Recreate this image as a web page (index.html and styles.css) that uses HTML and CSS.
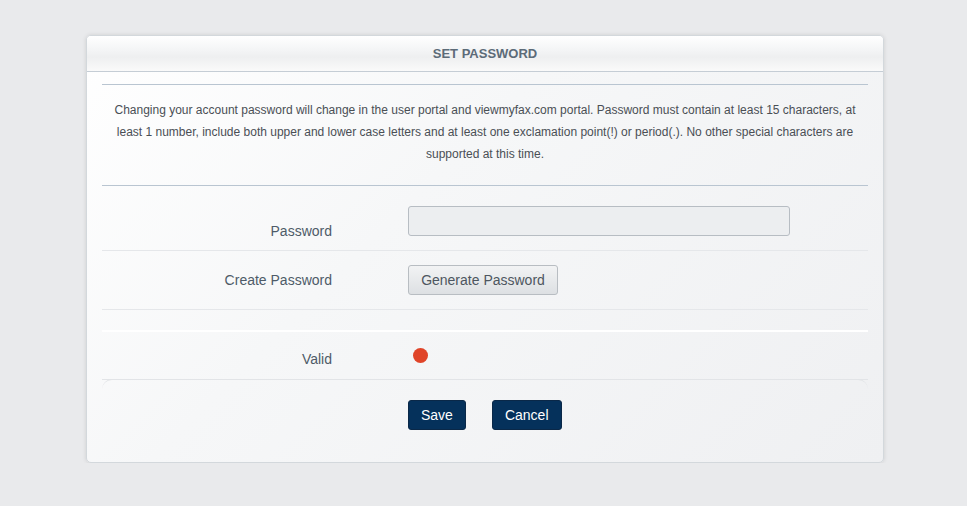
FILE: index.html
```html
<!DOCTYPE html>
<html>
<head>
<meta charset="utf-8">
<link rel="stylesheet" href="styles.css">
</head>
<body>
<div class="page">
  <div class="card">
    <div class="card-header">SET PASSWORD</div>
    <div class="card-body">
      <hr class="rule">
      <p class="info">Changing your account password will change in the user portal and viewmyfax.com portal. Password must contain at least 15 characters, at least 1 number, include both upper and lower case letters and at least one exclamation point(!) or period(.). No other special characters are supported at this time.</p>
      <hr class="rule rule-bottom">
      <div class="row row-password">
        <label class="label">Password</label>
        <div class="control"><input class="input" type="password"></div>
      </div>
      <div class="row row-create">
        <label class="label">Create Password</label>
        <div class="control"><button class="btn-gen">Generate Password</button></div>
      </div>
      <div class="row row-empty"></div>
      <div class="row row-valid">
        <label class="label">Valid</label>
        <div class="control"><span class="dot"></span></div>
      </div>
      <div class="footer">
        <button class="btn-primary">Save</button>
        <button class="btn-primary">Cancel</button>
      </div>
    </div>
  </div>
</div>
</body>
</html>
```

FILE: styles.css
```css
html, body {
  margin: 0;
  padding: 0;
  background: #e9eaec;
  font-family: "Liberation Sans", Arial, sans-serif;
}
.page {
  padding: 35px 0 0 86px;
}
.card {
  width: 798px;
  height: 428px;
  border: 1px solid #d3d8dc;
  border-radius: 5px;
  background: linear-gradient(135deg, #ffffff 0%, #f6f7f8 40%, #eff0f2 100%);
  box-shadow: 0 0 4px rgba(0,0,0,0.12);
  overflow: hidden;
  box-sizing: border-box;
}
.card-header {
  height: 35px;
  border-bottom: 1px solid #c5cdd5;
  background: linear-gradient(to bottom, #ffffff 0%, #f5f6f7 35%, #eeeff0 60%, #fafafa 100%);
  text-align: center;
  font-size: 13px;
  font-weight: bold;
  color: #5c6b78;
  line-height: 35px;
}
.card-body {
  padding: 0 15px;
}
.rule {
  border: 0;
  border-top: 1px solid #b9c5d1;
  margin: 12px 0 0;
}
.rule-bottom {
  margin: 0;
}
.info {
  margin: 0;
  padding: 14px 8px 20px;
  text-align: center;
  font-size: 12px;
  line-height: 22px;
  color: #4a4f55;
}
.row {
  display: grid;
  grid-template-columns: 230px 1fr;
  column-gap: 76px;
  border-bottom: 1px solid #e5e7ea;
}
.label {
  text-align: right;
  font-size: 14px;
  color: #4e5b68;
}
.row-password {
  height: 65px;
  box-sizing: border-box;
  padding-top: 20px;
}
.row-password .label {
  padding-top: 17px;
}
.input {
  display: block;
  width: 382px;
  height: 30px;
  box-sizing: border-box;
  border: 1px solid #b7bdc3;
  border-radius: 3px;
  background: #eceef0;
  margin: 0;
}
.row-create {
  height: 59px;
  box-sizing: border-box;
  padding-top: 14px;
}
.row-create .label {
  line-height: 30px;
}
.btn-gen {
  display: block;
  width: 150px;
  height: 30px;
  border: 1px solid #b8bdc2;
  border-radius: 3px;
  background: linear-gradient(to bottom, #f2f3f4, #dde0e3);
  font-family: "Liberation Sans", Arial, sans-serif;
  font-size: 14px;
  color: #4d5660;
  padding: 0;
}
.row-empty {
  height: 22px;
  border-bottom: 2px solid #ffffff;
  box-sizing: border-box;
}
.row-valid {
  height: 48px;
  box-sizing: border-box;
  padding-top: 19px;
  border-bottom: 1px solid #e2e4e7;
}
.row-valid .label {
  line-height: 16px;
}
.dot {
  display: block;
  width: 15px;
  height: 15px;
  border-radius: 50%;
  background: #e04428;
  margin: -3px 0 0 5px;
}
.footer {
  margin-top: -1px;
  border-top: 1px solid #e2e4e7;
  border-radius: 10px 10px 0 0;
  padding-top: 20px;
  padding-left: 306px;
  display: flex;
  gap: 26px;
}
.btn-primary {
  height: 30px;
  padding: 0 12px;
  background: #05315b;
  color: #ffffff;
  border: 1px solid #0a2848;
  border-radius: 3px;
  font-family: "Liberation Sans", Arial, sans-serif;
  font-size: 14px;
}
```
